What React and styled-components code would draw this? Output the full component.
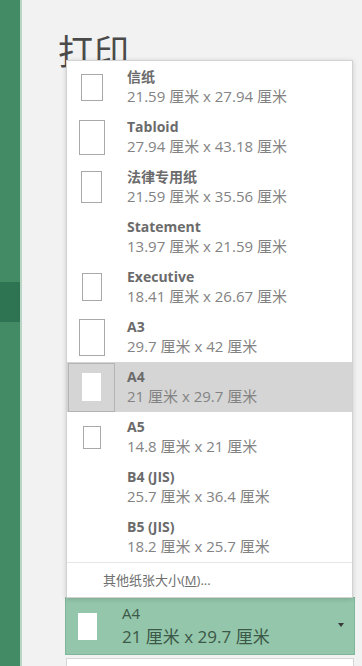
import React from "react";
import styled, { createGlobalStyle } from "styled-components";

const Global = createGlobalStyle`
  html, body { margin: 0; padding: 0; }
  body {
    width: 362px;
    height: 666px;
    overflow: hidden;
    background: #f2f2f2;
    font-family: "Open Sans", "Noto Sans CJK SC", sans-serif;
  }
`;

const Page = styled.div`
  display: flex;
  width: 362px;
  height: 666px;
  overflow: hidden;
`;

const Sidebar = styled.div`
  width: 20px;
  flex: none;
  background: #428b65;
  border-right: 2px solid #b8d5c5;
  display: flex;
  flex-direction: column;
  padding-top: 282px;
`;

const SideSelected = styled.div`
  height: 40px;
  background: #2f7452;
`;

const Main = styled.div`
  position: relative;
  flex: 1;
  display: flex;
  flex-direction: column;
  padding: 31px 0 0 36px;
  overflow: hidden;
`;

const Title = styled.h1`
  margin: 0;
  font-family: "Noto Sans CJK SC", sans-serif;
  font-weight: 400;
  font-size: 35px;
  line-height: 38px;
  color: #4a4a4a;
  letter-spacing: 1px;
  flex: none;
`;

const Trigger = styled.div`
  margin: 528px 7px 0 7px;
  height: 56px;
  flex: none;
  background: #93c6aa;
  border: 1px solid #80b697;
  display: flex;
  align-items: center;
  padding: 0 10px 0 12px;
  box-sizing: content-box;
`;

const TriggerPaper = styled.div`
  width: 19px;
  height: 27px;
  background: #fff;
  flex: none;
  margin-top: 1px;
`;

const TriggerText = styled.div`
  flex: 1;
  margin-left: 25px;
  display: flex;
  flex-direction: column;
  color: #3c5848;
`;

const TriggerName = styled.div`
  font-size: 15px;
  line-height: 22px;
`;

const TriggerSize = styled.div`
  font-size: 17px;
  line-height: 26px;
`;

const Caret = styled.div`
  width: 0;
  height: 0;
  border-left: 3.5px solid transparent;
  border-right: 3.5px solid transparent;
  border-top: 4px solid #3a3a3a;
  margin-top: -2px;
`;

const NextBox = styled.div`
  margin: 3px 8px 0 8px;
  height: 30px;
  background: #fff;
  border: 1px solid #d6d6d6;
  flex: none;
`;

const Panel = styled.div`
  position: absolute;
  left: 44px;
  top: 60px;
  width: 285px;
  height: 535px;
  background: #fff;
  border: 1px solid #d2d2d2;
  box-shadow: 0 1px 5px rgba(0, 0, 0, 0.16);
  display: flex;
  flex-direction: column;
  padding-top: 1px;
  box-sizing: content-box;
`;

const Row = styled.div`
  height: 50px;
  display: flex;
  align-items: center;
  background: ${(p) => (p.$selected ? "#d5d5d5" : "transparent")};
`;

const IconCell = styled.div`
  width: 47px;
  height: 49px;
  margin-left: 1px;
  box-sizing: border-box;
  border: 1px solid ${(p) => (p.$selected ? "#b3b3b3" : "transparent")};
  display: flex;
  align-items: center;
  justify-content: center;
  flex: none;
`;

const Paper = styled.div`
  box-sizing: border-box;
  background: #fff;
  border: 1px solid ${(p) => (p.$selected ? "#fff" : "#a9a9a9")};
`;

const Texts = styled.div`
  margin-left: 12px;
  display: flex;
  flex-direction: column;
`;

const Name = styled.div`
  font-size: 14px;
  font-weight: 700;
  line-height: 19px;
  color: #6b6b6b;
`;

const Size = styled.div`
  font-size: 15px;
  line-height: 21px;
  color: #838383;
`;

const Separator = styled.div`
  height: 1px;
  background: #e6e6e6;
`;

const More = styled.div`
  height: 33px;
  display: flex;
  align-items: center;
  padding-left: 36px;
  font-size: 13px;
  color: #6e6e6e;
  u { text-decoration: underline; }
`;

const papers = [
  { name: "信纸", size: "21.59 厘米 x 27.94 厘米", w: 22, h: 27 },
  { name: "Tabloid", size: "27.94 厘米 x 43.18 厘米", w: 26, h: 35 },
  { name: "法律专用纸", size: "21.59 厘米 x 35.56 厘米", w: 21, h: 32 },
  { name: "Statement", size: "13.97 厘米 x 21.59 厘米" },
  { name: "Executive", size: "18.41 厘米 x 26.67 厘米", w: 20, h: 28 },
  { name: "A3", size: "29.7 厘米 x 42 厘米", w: 26, h: 37 },
  { name: "A4", size: "21 厘米 x 29.7 厘米", w: 19, h: 28, selected: true },
  { name: "A5", size: "14.8 厘米 x 21 厘米", w: 18, h: 23 },
  { name: "B4 (JIS)", size: "25.7 厘米 x 36.4 厘米" },
  { name: "B5 (JIS)", size: "18.2 厘米 x 25.7 厘米" },
];

export default function App() {
  return (
    <>
      <Global />
      <Page>
        <Sidebar>
          <SideSelected />
        </Sidebar>
        <Main>
          <Title>打印</Title>
          <Trigger>
            <TriggerPaper />
            <TriggerText>
              <TriggerName>A4</TriggerName>
              <TriggerSize>21 厘米 x 29.7 厘米</TriggerSize>
            </TriggerText>
            <Caret />
          </Trigger>
          <NextBox />
          <Panel>
            {papers.map((p) => (
              <Row key={p.name} $selected={p.selected}>
                <IconCell $selected={p.selected}>
                  {p.w && (
                    <Paper
                      $selected={p.selected}
                      style={{ width: p.w, height: p.h }}
                    />
                  )}
                </IconCell>
                <Texts>
                  <Name>{p.name}</Name>
                  <Size>{p.size}</Size>
                </Texts>
              </Row>
            ))}
            <Separator />
            <More>
              <span>
                其他纸张大小(<u>M</u>)...
              </span>
            </More>
          </Panel>
        </Main>
      </Page>
    </>
  );
}
